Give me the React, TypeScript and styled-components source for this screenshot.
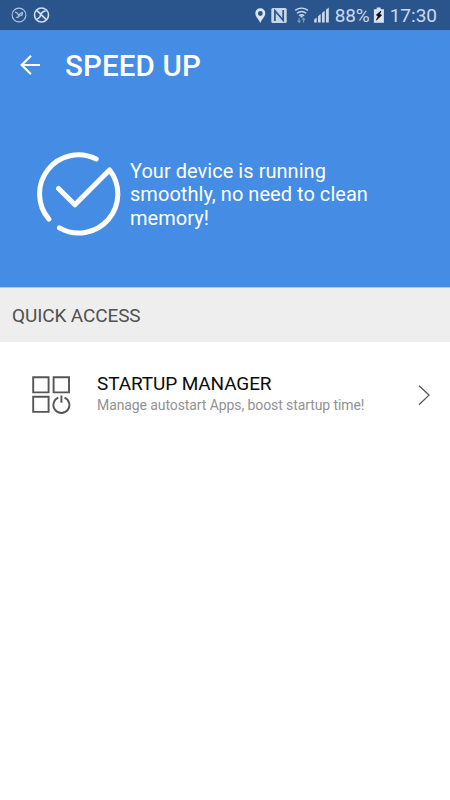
import React from "react";
import styled, { createGlobalStyle } from "styled-components";

const GlobalStyle = createGlobalStyle`
  * { box-sizing: border-box; }
  body { margin: 0; background: #fff; font-family: Roboto, sans-serif; }
  svg { display: block; flex: none; }
`;

const Screen = styled.div`
  width: 450px;
  height: 800px;
  overflow: hidden;
  background: #fff;
  display: flex;
  flex-direction: column;
`;

const StatusBar = styled.header`
  height: 30px;
  flex: none;
  background: #29558c;
  color: #c9d9ee;
  display: flex;
  align-items: center;
  justify-content: space-between;
  padding: 0 13px 0 10px;
`;

const StatusGroup = styled.div`
  display: flex;
  align-items: center;
`;

const StatusText = styled.span<{ $spacing: number }>`
  font-size: 19px;
  line-height: 30px;
  letter-spacing: ${(p) => p.$spacing}px;
  padding-top: 1px;
  height: 30px;
`;

const Hero = styled.section`
  height: 258px;
  flex: none;
  background: #448ce4;
  color: #fff;
  border-bottom: 1px solid #a9c9f0;
`;

const TitleBar = styled.div`
  height: 70px;
  display: flex;
  align-items: center;
  gap: 25px;
  padding-left: 19px;
`;

const Title = styled.h1`
  margin: 2px 0 0;
  font-size: 29.5px;
  line-height: 36px;
  font-weight: 500;
  letter-spacing: 0.15px;
`;

const Result = styled.div`
  display: flex;
  align-items: center;
  padding: 51px 0 0 36px;
  gap: 8px;
`;

const Message = styled.p`
  margin: 2px 0 0;
  width: 260px;
  font-size: 20px;
  line-height: 23.3px;
  letter-spacing: 0.04px;
`;

const SectionHeader = styled.h2`
  margin: 0;
  height: 54px;
  flex: none;
  padding: 1px 0 0 12px;
  background: #eee;
  color: #505050;
  font-size: 19px;
  font-weight: 400;
  line-height: 54px;
  letter-spacing: -0.12px;
`;

const Row = styled.div`
  display: flex;
  align-items: center;
  height: 105px;
  padding: 0 19px 0 31px;
`;

const RowText = styled.div`
  flex: 1;
  margin: -1px 0 0 26px;
`;

const RowTitle = styled.div`
  color: #0c0c0c;
  font-size: 19px;
  line-height: 22px;
  letter-spacing: -0.12px;
`;

const RowNote = styled.div`
  color: #929292;
  font-size: 14px;
  line-height: 20px;
  letter-spacing: -0.09px;
`;

const NoticeIcons = () => (
  <svg width="42" height="30" viewBox="10 0 42 30" fill="none" stroke="#b4c8e2">
    <circle cx="19" cy="15" r="6.9" strokeWidth="1.1" />
    <path d="M15 12.4q1.8-.4 2.6 1.2l1.6 2.6q-1.4 1.9-3 .9M23 12.4q-2.4 0-3.4 2.2l-.8 1.7M20.2 15.6q2 .2 2.4-2.4" strokeWidth="1.2" />
    <circle cx="41.5" cy="15" r="7" stroke="#d0def0" strokeWidth="1.6" />
    <path d="M36.8 10.3l9.5 9.4M45.7 11q-3.4.2-4.7 3l-1 2.6q-1.3 2-3.2 2.6" stroke="#d0def0" strokeWidth="1.7" />
  </svg>
);

const SignalIcons = () => (
  <svg width="82" height="30" viewBox="253 0 82 30">
    <path d="M260.3 8.3a5 5 0 0 0-5 5c0 3.2 3.2 5.6 5 9.6 1.8-4 5-6.4 5-9.6a5 5 0 0 0-5-5zm0 2.8a2.4 2.4 0 1 1 0 4.8 2.4 2.4 0 0 1 0-4.8z" fill="#dce7f5" fillRule="evenodd" />
    <rect x="271.3" y="8" width="15.4" height="15" rx="1.5" fill="#c7d6e9" />
    <path d="M274.9 21V10.8l8.3 9.4V10" fill="none" stroke="#29558c" strokeWidth="1.7" />
    <g fill="none" stroke="#c9d9ee" strokeWidth="1.4">
      <path d="M295.2 10.4q6.4-4.6 12.8 0M297 13.2q4.6-3.5 9.2 0M299 15.7q2.6-2 5.2 0" />
      <path d="M301.6 15.5v2" strokeWidth="2.2" />
    </g>
    <path d="M299.1 18v4.2M297.7 20.6l1.4 1.7 1.4-1.7M303.6 22.6v-4.2M302.2 20l1.4-1.7L305 20" fill="none" stroke="#7e9cc2" strokeWidth="1.1" />
    <path d="M314.2 22.5V19.4l2.5-2v5.1zM318 22.5v-6.3l2.7-2.2v8.5zM322 22.5V13l2.7-2.3v11.8zM326 22.5V9.7l2.8-2.2v15z" fill="#c9d9ee" />
  </svg>
);

const BatteryIcon = () => (
  <svg width="20" height="30" viewBox="370 0 20 30">
    <path d="M376.7 7.5h4v1.7h3.2v13.6h-10V9.2h2.8z" fill="#d8e4f3" />
    <path d="M381 11l-4.7 4 2 1-2 4.2 5.3-5-2-1z" fill="#070b12" stroke="#070b12" strokeWidth=".7" />
  </svg>
);

const BackIcon = () => (
  <svg width="21" height="22" viewBox="19 54 21 22" fill="none" stroke="#fff" strokeWidth="2.2">
    <path d="M40 65H21.2M31 55.7L21.7 65l9.3 9.3" />
  </svg>
);

const CheckIcon = () => (
  <svg width="86" height="86" viewBox="35.5 150.5 86 86" fill="none" stroke="#fff" strokeWidth="5" strokeLinecap="round" strokeLinejoin="round">
    <path d="M95.7 158.6A39 39 0 0 0 48.4 218.7" />
    <path d="M58.9 227.3A39 39 0 0 0 109 169.4L74.4 204.3 58 188" />
  </svg>
);

const StartupIcon = () => (
  <svg width="40" height="40" viewBox="31 375 40 40" fill="none" stroke="#565656" strokeWidth="1.9">
    <path d="M33.2 377.2h15.4v15.2H33.2zM53.6 377.2H69v15.2H53.6zM33.2 396.7h15.4v15.2H33.2z" />
    <path d="M58.3 397.6a8 8 0 1 0 6.2 0M61.4 395.6v7.2" />
  </svg>
);

const ChevronIcon = () => (
  <svg width="14" height="22" viewBox="417 384 14 22" fill="none" stroke="#555" strokeWidth="1.3">
    <path d="M419 385.7l10 9.4-10 9.6" />
  </svg>
);

export default function App() {
  return (
    <>
      <GlobalStyle />
      <Screen>
        <StatusBar>
          <NoticeIcons />
          <StatusGroup>
            <SignalIcons />
            <StatusText $spacing={-0.1}>88%</StatusText>
            <BatteryIcon />
            <StatusText $spacing={0}>17:30</StatusText>
          </StatusGroup>
        </StatusBar>
        <Hero>
          <TitleBar>
            <BackIcon />
            <Title>SPEED UP</Title>
          </TitleBar>
          <Result>
            <CheckIcon />
            <Message>Your device is running smoothly, no need to clean memory!</Message>
          </Result>
        </Hero>
        <SectionHeader>QUICK ACCESS</SectionHeader>
        <Row>
          <StartupIcon />
          <RowText>
            <RowTitle>STARTUP MANAGER</RowTitle>
            <RowNote>Manage autostart Apps, boost startup time!</RowNote>
          </RowText>
          <ChevronIcon />
        </Row>
      </Screen>
    </>
  );
}
